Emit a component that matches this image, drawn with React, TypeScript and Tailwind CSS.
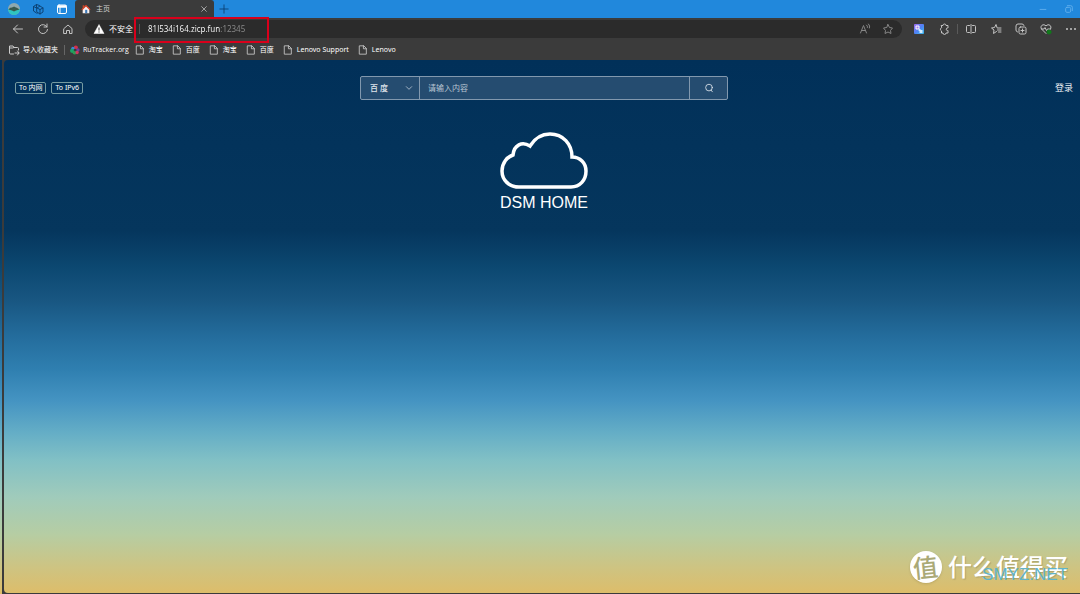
import type { ReactNode } from 'react';

const tabs = [{ title: '主页' }];

const bookmarks = ['淘宝', '百度', '淘宝', '百度', 'Lenovo Support', 'Lenovo'];

const sky =
  'bg-[linear-gradient(180deg,#013059_0%,#05365d_32%,#0c4871_39%,#185681_45%,#246d9d_52%,#2f7fb0_58%,#4594c2_64%,#65aec6_70%,#81c0c5_75%,#a0cbbb_82%,#b6cda3_89%,#cdc483_95%,#ddbd6a_100%)]';

function Icon({ children, className = 'size-3' }: { children: ReactNode; className?: string }) {
  return (
    <svg
      viewBox="0 0 24 24"
      fill="none"
      stroke="currentColor"
      strokeWidth="2"
      strokeLinecap="round"
      strokeLinejoin="round"
      className={`shrink-0 ${className}`}
      aria-hidden="true"
    >
      {children}
    </svg>
  );
}

function IconButton({ label, children, className = '' }: { label: string; children: ReactNode; className?: string }) {
  return (
    <button type="button" aria-label={label} className={`flex shrink-0 items-center justify-center ${className}`}>
      {children}
    </button>
  );
}

function TabStrip() {
  return (
    <div className="flex h-[18px] bg-[#2188dc]">
      <div className="flex w-[75px] shrink-0 items-center pl-2">
        <IconButton label="个人资料" className="w-3">
          <svg viewBox="0 0 24 24" className="size-3">
            <circle cx="12" cy="12" r="12" fill="#8fa9ae" />
            <path d="M0 12h24a12 12 0 0 1-24 0" fill="#2fc5c0" />
            <path d="M1 13C4 8 8 10 12 7c4 3 7 2 11 6l-7 2-4 2-4-2z" fill="#38594c" />
          </svg>
        </IconButton>
        <IconButton label="工作区" className="ml-3 w-3 text-[#0c4377]">
          <Icon>
            <path d="M9 9V3L3 7v9l6 4h2M9 3l6 2M3 7l6 3M10 10l6-4 6 4v8l-6 4-6-4zM10 10l6 3 6-3M16 13v9" />
          </Icon>
        </IconButton>
        <IconButton label="标签页操作" className="ml-3 w-3 text-white">
          <Icon>
            <rect x="3" y="4" width="18" height="17" rx="3" />
            <path d="M4 6h16M4 8h16" strokeWidth="3" />
            <path d="M8 9v11" />
          </Icon>
        </IconButton>
      </div>
      {tabs.map((tab) => (
        <div key={tab.title} className="flex w-[139px] items-center rounded-t-[3px] bg-[#3b3b3b] pr-1 pl-1.5">
          <svg viewBox="0 0 24 24" className="size-2.5" aria-hidden="true">
            <path d="M4 11v11h16V11l-8-7z" fill="#f5eeee" />
            <path d="m1 13 11-11 11 11-2 2-9-9-9 9z" fill="#df3e22" />
            <path d="M4 3h4v5L4 11z" fill="#c84628" />
            <path d="M10 14h5v8h-5z" fill="#3c79b8" />
          </svg>
          <span className="ml-[5px] flex-1 text-[7px] leading-[18px] text-[#d0d0d0]">{tab.title}</span>
          <IconButton label="关闭标签页" className="w-3 text-[#d5d5d5]">
            <Icon className="size-2">
              <path d="m5 5 14 14M19 5 5 19" />
            </Icon>
          </IconButton>
        </div>
      ))}
      <IconButton label="新建标签页" className="ml-1 w-3 text-[#0b3d6c]">
        <Icon className="size-2.5">
          <path d="M12 2v20M2 12h20" />
        </Icon>
      </IconButton>
      <div className="ml-auto flex items-center gap-4 pr-1.5 text-[#66b2ee]">
        <IconButton label="最小化" className="w-2.5">
          <Icon className="size-2.5">
            <path d="M5 13h14" />
          </Icon>
        </IconButton>
        <IconButton label="还原" className="w-2.5">
          <Icon className="size-2.5">
            <rect x="4" y="8" width="12" height="12" rx="3" />
            <path d="M8 4h8a4 4 0 0 1 4 4v8" />
          </Icon>
        </IconButton>
      </div>
    </div>
  );
}

function AddressBar() {
  return (
    <div className="flex h-[18px] flex-1 items-center rounded-full bg-[#2b2b2b] px-2">
      <svg viewBox="0 0 24 24" className="size-3 shrink-0" aria-hidden="true">
        <path d="M12 3 2 21h20z" fill="#fff" stroke="#fff" strokeWidth="1" strokeLinejoin="round" />
        <path d="M12 9v6M12 17v2" stroke="#2b2b2b" strokeWidth="2" />
      </svg>
      <span className="ml-1 shrink-0 text-[8px] text-white">不安全</span>
      <div className="relative ml-1 flex h-[18px] flex-1 items-center pl-0.5">
        <span className="mr-2 h-2.5 w-px bg-[#555]" />
        <input
          aria-label="地址"
          defaultValue="81l534i164.zicp.fun:12345"
          className="min-w-0 flex-1 bg-[linear-gradient(90deg,#fff_72px,#8c8c8c_72px)] bg-clip-text text-[8px] text-transparent outline-none"
        />
        <div className="pointer-events-none absolute -top-[3px] -left-[3px] h-[26px] w-[135px] border-2 border-[#d9001b]" />
      </div>
      <IconButton label="大声朗读" className="w-3 text-[#858585]">
        <Icon>
          <path d="m3 20 6-15 6 15M5 15h8M15 4q3 2 2 5M19 2q4 4 2 8" />
        </Icon>
      </IconButton>
      <IconButton label="添加到收藏夹" className="ml-[11px] w-3 text-[#858585]">
        <Icon>
          <path d="m12 3 3 6 6 1-4 5 1 6-6-3-6 3 1-6-4-5 6-1z" />
        </Icon>
      </IconButton>
    </div>
  );
}

function Toolbar() {
  return (
    <div className="flex h-[22px] items-center bg-[#3b3b3b] pr-[3px] pl-3 text-[#c4c4c4]">
      <div className="flex w-[73px] shrink-0 items-center gap-[13px]">
        <IconButton label="后退">
          <Icon>
            <path d="M21 12H3M11 4l-8 8 8 8" />
          </Icon>
        </IconButton>
        <IconButton label="刷新">
          <Icon>
            <path d="M20 8a9 9 0 1 0 1 5M20 2v6h-6" />
          </Icon>
        </IconButton>
        <IconButton label="主页">
          <Icon>
            <path d="m4 11 8-7 8 7v10h-5v-6H9v6H4z" />
          </Icon>
        </IconButton>
      </div>
      <AddressBar />
      <div className="ml-[11px] flex shrink-0 items-center gap-[13px]">
        <IconButton label="翻译扩展">
          <svg viewBox="0 0 24 24" className="size-3">
            <defs>
              <linearGradient id="ext" x1="0" y1="0" x2="1" y2="1">
                <stop stopColor="#a46cf0" />
                <stop offset=".5" stopColor="#4f82f5" />
                <stop offset="1" stopColor="#3cbdec" />
              </linearGradient>
            </defs>
            <rect x="2" y="2" width="20" height="20" rx="2" fill="url(#ext)" />
            <path d="M6 6h6v6H6z" fill="#a77cf0" stroke="#fff" strokeWidth="2" />
            <path d="M12 12h3v2h4v6h-6v-4h-2z" fill="#d5edff" />
          </svg>
        </IconButton>
        <div className="flex items-center gap-[7px]">
          <IconButton label="扩展">
            <Icon>
              <path d="M7 5h3a3 3 0 0 1 6 0h4v5h-1a2 2 0 0 0 0 5h1v5h-4a3 3 0 0 1-6 0H7v-4a4 4 0 0 1 0-7z" />
            </Icon>
          </IconButton>
          <span className="h-2.5 w-px bg-[#5a5a5a]" />
          <IconButton label="拆分窗口">
            <Icon>
              <path d="M9 5H5a2 2 0 0 0-2 2v10a2 2 0 0 0 2 2h4M15 5h4a2 2 0 0 1 2 2v10a2 2 0 0 1-2 2h-4M12 3v18" />
            </Icon>
          </IconButton>
        </div>
        <IconButton label="收藏夹">
          <Icon>
            <path d="m14 9-2-6-3 6-6 1 5 4-1 7 6-4M15 10h7M15 14h7M17 18h5" />
          </Icon>
        </IconButton>
        <IconButton label="集锦">
          <Icon>
            <rect x="8" y="8" width="14" height="14" rx="3" />
            <path d="M15 12v6M12 15h6M5 18a4 4 0 0 1-3-4V6a4 4 0 0 1 4-4h8a4 4 0 0 1 4 3" />
          </Icon>
        </IconButton>
        <IconButton label="浏览器概要">
          <Icon>
            <path d="m12 21-9-9C-1 6 7 0 12 6c5-6 13 0 9 6M3 12h5l2-3 3 6 2-3h6" />
            <circle cx="18" cy="18" r="4" fill="#127a1c" stroke="#127a1c" />
          </Icon>
        </IconButton>
        <IconButton label="设置及其他">
          <Icon>
            <path d="M4 12h.01M12 12h.01M20 12h.01" strokeWidth="4" />
          </Icon>
        </IconButton>
      </div>
    </div>
  );
}

function BookmarkBar() {
  return (
    <nav className="flex h-5 items-center bg-[#3b3b3b] pl-2 text-[7px] whitespace-nowrap text-white">
      <button type="button" className="flex items-center gap-[3px]">
        <Icon className="size-3 text-[#ccc]">
          <path d="M11 20H5a2 2 0 0 1-2-2V4h7l2 3h7a2 2 0 0 1 2 2v3M3 8h6l3-1M14 18h8M19 14l3 4-3 4" />
        </Icon>
        导入收藏夹
      </button>
      <span className="mr-[5px] ml-1.5 h-2.5 w-px bg-[#666]" />
      <a href="#rutracker" className="mr-1.5 flex items-center gap-[3px] font-['Open_Sans',sans-serif]">
        <svg viewBox="0 0 24 24" className="size-2.5" aria-hidden="true">
          <circle cx="14" cy="6" r="5" fill="#d5304a" />
          <circle cx="7" cy="8" r="4" fill="#3c8ad8" />
          <circle cx="19" cy="12" r="4" fill="#6a3fa2" />
          <circle cx="5" cy="14" r="5" fill="#1aa567" />
          <circle cx="11" cy="18" r="5" fill="#2a9c55" />
          <circle cx="17" cy="18" r="4" fill="#d33560" />
          <circle cx="12" cy="12" r="3" fill="#3b3b3b" />
        </svg>
        RuTracker.org
      </a>
      <div className="flex items-center gap-[9px]">
        {bookmarks.map((name, i) => (
          <a key={i} href="#bookmark" className="flex items-center gap-1">
            <Icon className="size-2.5 text-[#ccc]">
              <path d="M4 2h10l6 6v14H4zM13 2v7h7" />
            </Icon>
            {name}
          </a>
        ))}
      </div>
    </nav>
  );
}

function SearchForm() {
  return (
    <form
      className="flex h-6 w-[368px] rounded-[2px] border border-[#8298ae] bg-[#254c70] text-[8px] text-[#e0e6ed]"
      onSubmit={(e) => e.preventDefault()}
    >
      <div className="relative w-[58px] shrink-0">
        <select aria-label="搜索引擎" className="size-full appearance-none bg-transparent pl-[9px] font-medium outline-none">
          <option>百 度</option>
        </select>
        <Icon className="pointer-events-none absolute top-[7px] right-1.5 size-2">
          <path d="m4 8 8 8 8-8" />
        </Icon>
      </div>
      <input
        aria-label="搜索内容"
        placeholder="请输入内容"
        className="min-w-0 flex-1 border-x border-[#8298ae] bg-transparent px-2 outline-none placeholder:text-[#b9c6d3]"
      />
      <button type="submit" aria-label="搜索" className="flex w-[37px] items-center justify-center">
        <Icon className="size-2.5">
          <circle cx="12" cy="11" r="8" />
          <path d="m17 17 3 4" />
        </Icon>
      </button>
    </form>
  );
}

function Watermark() {
  return (
    <div className="absolute right-3 bottom-2 flex items-center gap-1.5 text-white [text-shadow:1px_1px_1px_#887f5577]">
      <span className="flex size-8 items-center justify-center rounded-full bg-white text-[25px] leading-8 font-medium text-[#aaa977] shadow-sm [text-shadow:none]">
        <span className="-rotate-6">值</span>
      </span>
      <span className="text-2xl leading-9 font-medium">什么值得买</span>
      <span className="absolute right-0 bottom-0 font-['Liberation_Sans',sans-serif] text-[17px] leading-5 text-[#60b3c8] [text-shadow:none]">
        SMYZ.NET
      </span>
    </div>
  );
}

export default function App() {
  return (
    <div className="flex min-h-screen flex-col bg-[#3b3b3b] font-['Noto_Sans','Noto_Sans_CJK_SC',sans-serif]">
      <header>
        <TabStrip />
        <Toolbar />
        <BookmarkBar />
      </header>
      <div className={`flex flex-1 ${sky}`}>
        <div className="ml-0.5 flex flex-1 border-b border-l-2 border-[#3b3b3b] bg-[#3b3b3b]">
          <main className={`relative flex-1 rounded-l-[4px] ${sky}`}>
            <div className="grid grid-cols-[1fr_auto_1fr] items-center pt-4 pr-[7px] pl-[11px]">
              <div className="flex gap-[5px] text-[7px] leading-[10px] text-white">
                <button type="button" className="rounded-[2px] border border-[#769ba1] px-[3px]">
                  To 内网
                </button>
                <button type="button" className="rounded-[2px] border border-[#769ba1] px-[3px]">
                  To IPv6
                </button>
              </div>
              <SearchForm />
              <a href="#login" className="justify-self-end text-[9px] text-[#eef2f5]">
                登录
              </a>
            </div>
            <div className="mt-8 flex flex-col items-center pl-1 text-white">
              <svg viewBox="0 0 88 57" className="h-[57px] w-[88px]" fill="none" stroke="currentColor" strokeWidth="3.5" aria-hidden="true">
                <path d="M19 55C9 55 2 48 2 39c0-8 5-14 11-16 1-10 9-14 17-9C35 6 42 2 50 2c13 0 22 10 22 23 8 0 14 6 14 14 0 9-6 16-15 16z" />
              </svg>
              <h1 className="mt-1 font-['Liberation_Sans',sans-serif] text-base leading-5">DSM HOME</h1>
            </div>
            <Watermark />
          </main>
        </div>
      </div>
    </div>
  );
}
